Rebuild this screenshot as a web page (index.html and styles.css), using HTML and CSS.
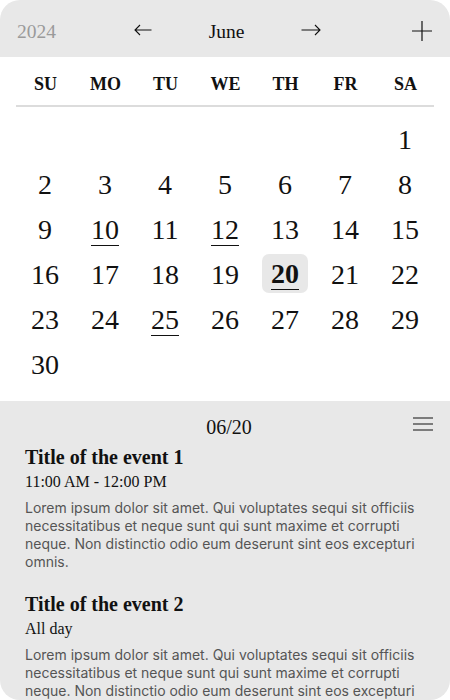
FILE: index.html
```html
<!DOCTYPE html>
<html>
<head>
<meta charset="utf-8">
<link rel="stylesheet" href="styles.css">
</head>
<body>
<div class="app">
  <header class="topbar">
    <span class="year">2024</span>
    <div class="month-nav">
      <svg class="arrow" width="18" height="12" viewBox="0 0 18 12"><path d="M17.5 6H1M6 1L1 6l5 5" fill="none" stroke="#111" stroke-width="1.1"/></svg>
      <span class="month">June</span>
      <svg class="arrow" width="20" height="12" viewBox="0 0 20 12"><path d="M0.5 6H19M14 1l5 5-5 5" fill="none" stroke="#111" stroke-width="1.1"/></svg>
    </div>
    <svg class="plus" width="20" height="20" viewBox="0 0 20 20"><path d="M10 0v20M0 10h20" fill="none" stroke="#111" stroke-width="1.2"/></svg>
  </header>

  <section class="calendar">
    <div class="weekdays">
      <span>SU</span><span>MO</span><span>TU</span><span>WE</span><span>TH</span><span>FR</span><span>SA</span>
    </div>
    <div class="days">
      <span class="day empty"></span><span class="day empty"></span><span class="day empty"></span><span class="day empty"></span><span class="day empty"></span><span class="day empty"></span>
      <span class="day">1</span>
      <span class="day">2</span><span class="day">3</span><span class="day">4</span><span class="day">5</span><span class="day">6</span><span class="day">7</span><span class="day">8</span>
      <span class="day">9</span><span class="day"><u class="mark">10</u></span><span class="day">11</span><span class="day"><u class="mark">12</u></span><span class="day">13</span><span class="day">14</span><span class="day">15</span>
      <span class="day">16</span><span class="day">17</span><span class="day">18</span><span class="day">19</span><span class="day"><span class="today"><u class="mark">20</u></span></span><span class="day">21</span><span class="day">22</span>
      <span class="day">23</span><span class="day">24</span><span class="day"><u class="mark">25</u></span><span class="day">26</span><span class="day">27</span><span class="day">28</span><span class="day">29</span>
      <span class="day">30</span>
    </div>
  </section>

  <section class="events">
    <div class="events-head">
      <span class="date">06/20</span>
      <svg class="menu" width="20" height="14" viewBox="0 0 20 14"><path d="M0 1h20M0 7h20M0 13h20" fill="none" stroke="#111" stroke-width="1.2"/></svg>
    </div>
    <article class="event">
      <h2 class="event-title">Title of the event 1</h2>
      <div class="event-time">11:00 AM - 12:00 PM</div>
      <p class="event-desc">Lorem ipsum dolor sit amet. Qui voluptates sequi sit officiis necessitatibus et neque sunt qui sunt maxime et corrupti neque. Non distinctio odio eum deserunt sint eos excepturi omnis.</p>
    </article>
    <article class="event">
      <h2 class="event-title">Title of the event 2</h2>
      <div class="event-time">All day</div>
      <p class="event-desc">Lorem ipsum dolor sit amet. Qui voluptates sequi sit officiis necessitatibus et neque sunt qui sunt maxime et corrupti neque. Non distinctio odio eum deserunt sint eos excepturi omnis.</p>
    </article>
  </section>
</div>
</body>
</html>
```

FILE: styles.css
```css
html, body {
  margin: 0;
  padding: 0;
  background: #ffffff;
}
body {
  width: 450px;
  height: 700px;
  overflow: hidden;
  font-family: "Liberation Serif", "Times New Roman", serif;
  color: #111;
}
.app {
  width: 450px;
  height: 700px;
  border-radius: 20px;
  overflow: hidden;
  background: #fff;
  display: flex;
  flex-direction: column;
}
.topbar {
  height: 57px;
  flex: none;
  background: #e8e8e8;
  display: grid;
  grid-template-columns: 1fr auto 1fr;
  align-items: center;
  padding: 0 18px 0 17px;
  box-sizing: border-box;
}
.year {
  font-size: 19.5px;
  color: #9a9a9a;
  justify-self: start;
  padding-top: 6px;
}
.month-nav {
  display: flex;
  align-items: center;
  gap: 57px;
  padding-left: 6px;
}
.month {
  font-size: 19.5px;
  padding-top: 6px;
}
.arrow { display: block; margin-top: 2px; }
.plus { justify-self: end; display: block; margin-top: 4px; }

.calendar {
  padding: 0 15px;
  flex: none;
}
.weekdays {
  display: grid;
  grid-template-columns: repeat(7, 60px);
  height: 46px;
  align-items: center;
  padding-top: 2px;
  border-bottom: 2px solid #dcdcdc;
  margin: 0 1px 0 1px;
}
.weekdays span {
  text-align: center;
  font-weight: bold;
  font-size: 18px;
  padding-top: 4px;
  margin-left: -1px;
}
.days {
  display: grid;
  grid-template-columns: repeat(7, 60px);
  grid-auto-rows: 45px;
  padding-top: 9px;
}
.day {
  display: flex;
  align-items: center;
  justify-content: center;
  font-size: 28px;
  line-height: 1;
  padding-top: 2px;
}
.mark {
  text-decoration: underline;
  text-decoration-thickness: 1px;
  text-underline-offset: 6px;
}
.today {
  background: #e8e8e8;
  border-radius: 7px;
  width: 46px;
  height: 39px;
  display: flex;
  align-items: center;
  justify-content: center;
  font-weight: bold;
  margin-top: -2px;
}

.events {
  flex: 1;
  margin-top: 15px;
  background: #e8e8e8;
  padding: 12px 17px 0 25px;
}
.events-head {
  position: relative;
  display: flex;
  justify-content: center;
  align-items: center;
  height: 26px;
}
.date {
  font-size: 20px;
  padding-top: 2px;
}
.menu {
  position: absolute;
  right: 0;
  top: 4px;
}
.event {
  margin-bottom: 20px;
}
.event-title {
  margin: 5px 0 0 0;
  font-size: 20px;
  line-height: 26px;
  font-weight: bold;
}
.event-time {
  font-size: 16px;
  line-height: 20px;
  margin-top: 2px;
}
.event-desc {
  margin: 7px 0 0 0;
  font-family: Inter, "Noto Sans", sans-serif;
  font-size: 14px;
  line-height: 18px;
  color: #555;
  padding-right: 8px;
}
```
